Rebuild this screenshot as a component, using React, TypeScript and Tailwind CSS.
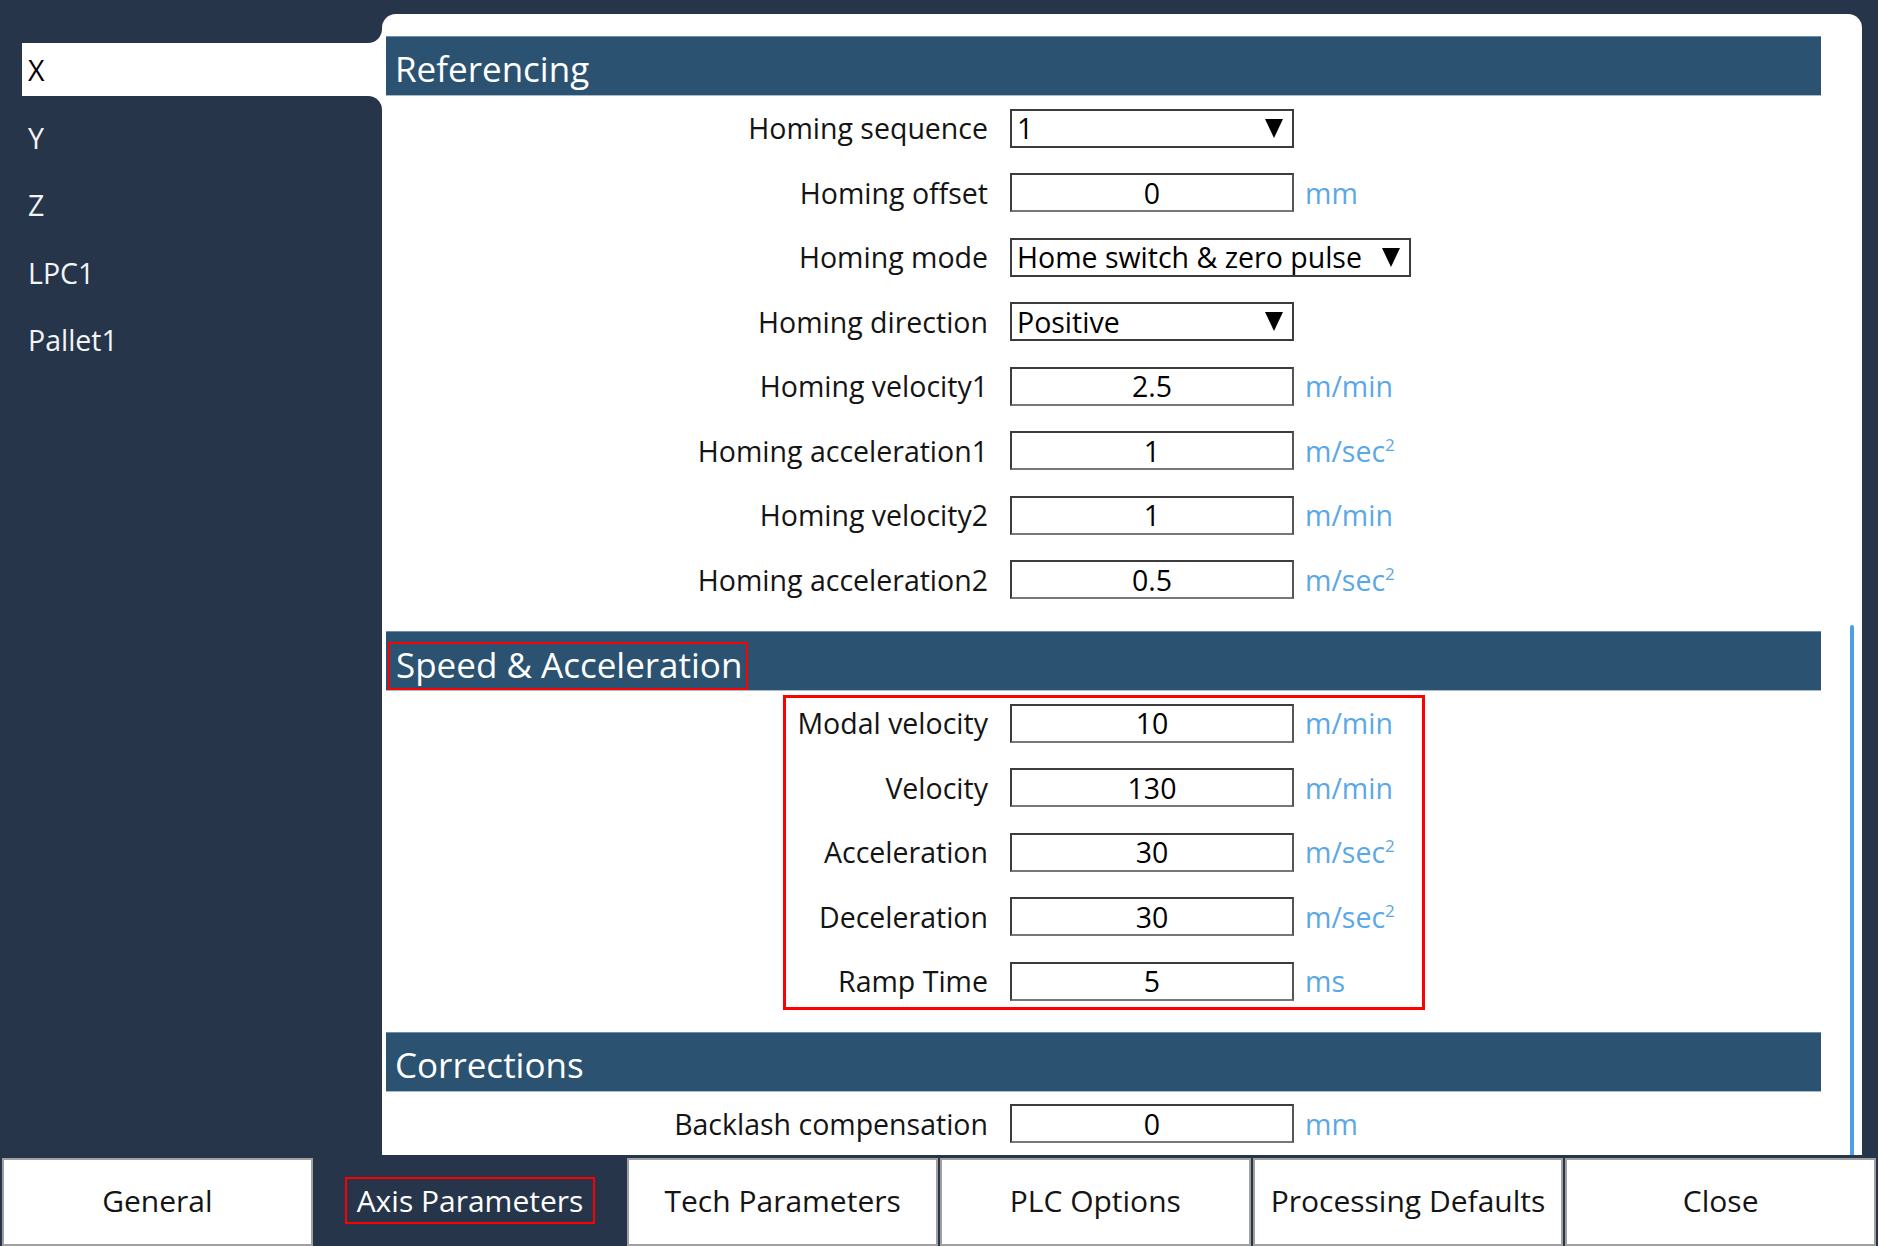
import React from "react";

type Row = {
  label: string;
  value: string;
  unit?: string;
  select?: boolean;
  wide?: boolean;
};

const referencing: Row[] = [
  { label: "Homing sequence", value: "1", select: true },
  { label: "Homing offset", value: "0", unit: "mm" },
  { label: "Homing mode", value: "Home switch & zero pulse", select: true, wide: true },
  { label: "Homing direction", value: "Positive", select: true },
  { label: "Homing velocity1", value: "2.5", unit: "m/min" },
  { label: "Homing acceleration1", value: "1", unit: "m/sec2" },
  { label: "Homing velocity2", value: "1", unit: "m/min" },
  { label: "Homing acceleration2", value: "0.5", unit: "m/sec2" },
];

const speed: Row[] = [
  { label: "Modal velocity", value: "10", unit: "m/min" },
  { label: "Velocity", value: "130", unit: "m/min" },
  { label: "Acceleration", value: "30", unit: "m/sec2" },
  { label: "Deceleration", value: "30", unit: "m/sec2" },
  { label: "Ramp Time", value: "5", unit: "ms" },
];

const corrections: Row[] = [{ label: "Backlash compensation", value: "0", unit: "mm" }];

const font = { fontFamily: '"Open Sans", "Noto Sans", sans-serif' };

function Triangle() {
  return (
    <svg width="18" height="19" viewBox="0 0 18 19" className="shrink-0">
      <polygon points="0,0 18,0 9,19" fill="#000" />
    </svg>
  );
}

function Unit({ unit }: { unit: string }) {
  if (unit === "m/sec2") {
    return (
      <span className="ml-[11px] text-[28.5px] text-[#5aa8e6] leading-none">
        m/sec<sup className="relative top-[-11px] align-baseline text-[17px] leading-none">2</sup>
      </span>
    );
  }
  return <span className="ml-[11px] text-[28.5px] text-[#5aa8e6] leading-none">{unit}</span>;
}

function FieldRow({ row }: { row: Row }) {
  return (
    <div className="flex h-[64.5px] items-center">
      <div className="w-[602px] shrink-0 text-right text-[28.5px] text-[#141414] leading-none">{row.label}</div>
      {row.select ? (
        <div
          className={`ml-[22px] flex h-[39px] items-center justify-between border-2 border-[#3c3c3c] bg-white pl-[5px] pr-[9px] ${
            row.wide ? "w-[401px]" : "w-[284px]"
          }`}
        >
          <span className="text-[28.5px] leading-none text-black">{row.value}</span>
          <Triangle />
        </div>
      ) : (
        <div className="ml-[22px] flex h-[39px] w-[284px] items-center justify-center border-2 border-[#3c3c3c] border-b-[#777] border-r-[#555] bg-white">
          <span className="text-[28.5px] leading-none text-black">{row.value}</span>
        </div>
      )}
      {row.unit && <Unit unit={row.unit} />}
    </div>
  );
}

function Header({ children }: { children: React.ReactNode }) {
  return (
    <div className="flex h-[60px] items-center border-t border-b border-t-[#6f8ea8] border-b-[#a8bccb] bg-[#2c5272] pl-[9px] pt-[5px] text-[35px] leading-none text-white">
      {children}
    </div>
  );
}

export default function App() {
  const sidebarItems = ["Y", "Z", "LPC1", "Pallet1"];
  const buttons = ["General", "Axis Parameters", "Tech Parameters", "PLC Options", "Processing Defaults", "Close"];
  return (
    <div className="flex h-[1246px] w-[1878px] flex-col overflow-hidden bg-[#263549]" style={font}>
      <div className="flex h-[1155px] shrink-0">
        {/* Sidebar */}
        <div className="flex w-[382px] shrink-0 flex-col bg-white">
          <div className="h-[43px] shrink-0 rounded-br-[14px] bg-[#263549]" />
          <div className="flex h-[53px] shrink-0">
            <div className="w-[22px] bg-[#263549]" />
            <div className="flex flex-1 items-center bg-white pl-[6px] pt-[2px] text-[28.5px] leading-none text-black">X</div>
          </div>
          <div className="flex flex-1 flex-col rounded-tr-[14px] bg-[#263549] pt-[8px]">
            {sidebarItems.map((s) => (
              <div key={s} className="flex h-[67.5px] items-center pl-[28px] text-[28.5px] leading-none text-[#f2f4f7]">
                {s}
              </div>
            ))}
          </div>
        </div>

        {/* Panel */}
        <div className="relative mr-[16px] mt-[14px] flex-1 overflow-hidden rounded-t-[14px] bg-white pl-[4px] pr-[41px] pt-[22px]">
          <Header>Referencing</Header>
          <div className="mb-[19px]">
            {referencing.map((r) => (
              <FieldRow key={r.label} row={r} />
            ))}
          </div>

          <div className="flex h-[60px] items-stretch border-t border-b border-t-[#6f8ea8] border-b-[#a8bccb] bg-[#2c5272] pl-[2px] text-[35px] leading-none text-white">
            <span className="mt-[10px] flex items-center border-2 border-[#ff0000] pb-[4px] pl-[6px] pr-[4px]">Speed &amp; Acceleration</span>
          </div>
          <div className="relative mb-[18px]">
            {speed.map((r) => (
              <FieldRow key={r.label} row={r} />
            ))}
            <div className="pointer-events-none absolute left-[397px] top-[4px] h-[315px] w-[642px] border-[3px] border-[#ff0000]" />
          </div>

          <Header>Corrections</Header>
          <div>
            {corrections.map((r) => (
              <FieldRow key={r.label} row={r} />
            ))}
          </div>

          <div className="absolute right-[8px] top-[611px] bottom-0 w-[4px] rounded-t-full bg-[#4a9fe6]" />
        </div>
      </div>

      {/* Bottom buttons */}
      <div className="mt-[3px] grid h-[88px] grid-cols-6 gap-[2px] px-[2px]">
        {buttons.map((b) =>
          b === "Axis Parameters" ? (
            <div key={b} className="flex items-center justify-center bg-[#263549] pb-[3px]">
              <span className="flex h-[47px] items-center border-2 border-[#ff0000] px-[10px] text-[30px] leading-none text-white">
                {b}
              </span>
            </div>
          ) : (
            <div key={b} className="flex items-center justify-center border-2 border-[#a0a0a0] bg-white pb-[3px] text-[30px] leading-none text-[#141414]">
              {b}
            </div>
          )
        )}
      </div>
    </div>
  );
}
